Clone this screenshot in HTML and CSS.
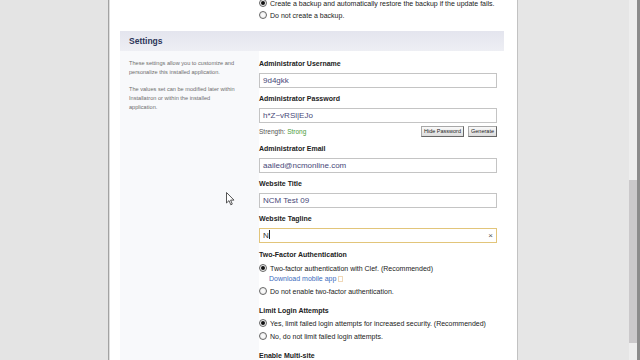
FILE: index.html
```html
<!DOCTYPE html>
<html>
<head>
<meta charset="utf-8">
<link rel="stylesheet" href="styles.css">
</head>
<body>
<div class="gutter-left"></div>
<div class="panel">
  <div class="top-opts">
    <div class="opt first"><span class="radio on"></span>Create a backup and automatically restore the backup if the update fails.</div>
    <div class="opt"><span class="radio"></span>Do not create a backup.</div>
  </div>
  <div class="section">
    <div class="section-head">Settings</div>
    <div class="section-body">
      <div class="desc">
        <p>These settings allow you to customize and<br>personalize this installed application.</p>
        <p>The values set can be modified later within<br>Installatron or within the installed<br>application.</p>
      </div>
      <div class="fields">
        <div class="label">Administrator Username</div>
        <div class="input">9d4gkk</div>
        <div class="label">Administrator Password</div>
        <div class="input">h*Z~vRSl|EJo</div>
        <div class="strength-row">
          <span class="strength">Strength: <span class="strong">Strong</span></span>
          <span class="btns"><span class="btn">Hide Password</span><span class="btn">Generate</span></span>
        </div>
        <div class="label">Administrator Email</div>
        <div class="input">aailed@ncmonline.com</div>
        <div class="label">Website Title</div>
        <div class="input">NCM Test 09</div>
        <div class="label">Website Tagline</div>
        <div class="input focus"><span>N<span class="caret"></span></span><span class="clear">×</span></div>
        <div class="label gap">Two-Factor Authentication</div>
        <div class="opt r1"><span class="radio on"></span>Two-factor authentication with Clef. (Recommended)</div>
        <div class="link-row"><span class="link">Download mobile app</span><span class="ext"></span></div>
        <div class="opt"><span class="radio"></span>Do not enable two-factor authentication.</div>
        <div class="label gap2">Limit Login Attempts</div>
        <div class="opt"><span class="radio on"></span>Yes, limit failed login attempts for increased security. (Recommended)</div>
        <div class="opt"><span class="radio"></span>No, do not limit failed login attempts.</div>
        <div class="label gap2">Enable Multi-site</div>
      </div>
    </div>
  </div>
  <svg class="cursor" width="9" height="14" viewBox="0 0 9 14"><path d="M0.5 0.5 L0.5 11 L3 8.6 L4.8 12.8 L6.3 12.1 L4.6 8.1 L8 8.1 Z" fill="#fff" stroke="#444" stroke-width="0.9" stroke-linejoin="round"/></svg>
</div>
<div class="gutter-right"></div>
<div class="scrollbar"><div class="thumb"></div></div>
<div class="edge"></div>
</body>
</html>
```

FILE: styles.css
```css
html, body {
  margin: 0;
  padding: 0;
  height: 360px;
  overflow: hidden;
}
body {
  display: flex;
  background: #e4e4e4;
  font-family: "Liberation Sans", Arial, sans-serif;
  color: #222;
}
.gutter-left {
  width: 108px;
  flex: none;
  background: #e4e4e4;
}
.panel {
  position: relative;
  width: 408px;
  flex: none;
  background: #fff;
  border-left: 1px solid #a2a2a2;
  border-right: 1px solid #c2c2c2;
  box-shadow: inset 1px 0 0 #dedede;
}
.gutter-right {
  flex: 1;
  background: #e6e6e6;
}
.scrollbar {
  width: 8px;
  flex: none;
  background: #eeeeee;
}
.thumb {
  margin-top: 180px;
  height: 163px;
  background: #cbc9cb;
}
.edge {
  width: 3px;
  flex: none;
  background: #8c8c8c;
}
.top-opts {
  display: flow-root;
  padding-left: 150px;
  height: 31px;
}
.opt {
  display: flex;
  align-items: center;
  height: 12px;
  font-size: 7px;
  color: #222;
  white-space: nowrap;
}
.opt.first {
  margin-top: -3px;
}
.fields .opt {
  margin-top: 1px;
}
.fields .opt.r1 {
  margin-top: 2px;
}
.radio {
  width: 6px;
  height: 6px;
  border-radius: 50%;
  border: 1px solid #666;
  background: radial-gradient(circle, #fff 0%, #e8e8e8 100%);
  margin-right: 3px;
  flex: none;
  position: relative;
}
.radio.on::after {
  content: "";
  position: absolute;
  left: 1px;
  top: 1px;
  width: 4px;
  height: 4px;
  border-radius: 50%;
  background: #111;
}
.section {
  margin-left: 11px;
  width: 384px;
}
.section-head {
  height: 20px;
  line-height: 20px;
  padding-left: 9px;
  font-size: 8.5px;
  font-weight: bold;
  color: #2c3558;
  background: linear-gradient(#e4e5ee, #eeeff4);
}
.section-body {
  display: flex;
}
.desc {
  width: 121px;
  padding: 8px 9px 0 9px;
  background: #f8f9fb;
  min-height: 330px;
  font-size: 5.6px;
  line-height: 8.7px;
  color: #6e6e6e;
  white-space: nowrap;
}
.desc p {
  margin: 0 0 8.7px 0;
}
.fields {
  width: 238px;
  padding-top: 8px;
}
.label {
  height: 10px;
  line-height: 10px;
  font-size: 7px;
  font-weight: bold;
  color: #222;
  white-space: nowrap;
}
.input + .label {
  margin-top: 6px;
}
.label.gap {
  margin-top: 7px;
}
.label.gap2 {
  margin-top: 9px;
}
.input {
  margin-top: 4px;
  height: 13px;
  line-height: 13px;
  border: 1px solid #c4c4c4;
  padding: 0 3px;
  font-size: 8px;
  color: #484878;
  display: flex;
  justify-content: space-between;
  align-items: center;
}
.input.focus {
  border-color: #e2c57a;
  color: #333;
}
.caret {
  display: inline-block;
  width: 1px;
  height: 9px;
  background: #222;
  vertical-align: -1px;
  margin-left: 0.5px;
}
.clear {
  font-size: 8px;
  color: #555;
}
.strength-row {
  margin-top: 3px;
  height: 11px;
  display: flex;
  justify-content: space-between;
  align-items: center;
}
.strength-row + .label {
  margin-top: 7px;
}
.strength {
  font-size: 6.5px;
  color: #555;
}
.strong {
  color: #4b9b3c;
}
.btns {
  display: flex;
  gap: 4px;
}
.btn {
  height: 9px;
  line-height: 9px;
  padding: 0 2px;
  font-size: 5.5px;
  color: #222;
  border: 1px solid #a8a8a8;
  border-right-color: #666;
  border-bottom-color: #666;
  background: linear-gradient(#fafafa, #dcdcdc);
}
.btn:first-child {
  width: 37px;
  text-align: center;
}
.btn:last-child {
  width: 23px;
  text-align: center;
}
.link-row {
  height: 10px;
  line-height: 10px;
  padding-left: 10px;
  display: flex;
  align-items: center;
}
.link {
  font-size: 7px;
  color: #3c6bbd;
}
.ext {
  width: 3px;
  height: 4px;
  margin-left: 2px;
  border: 1px solid #f0d8b8;
}
.cursor {
  position: absolute;
  left: 117px;
  top: 192px;
}
```
